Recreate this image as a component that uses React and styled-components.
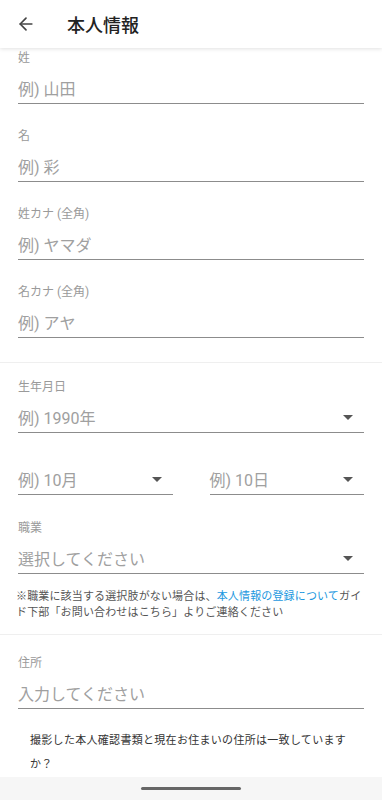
import React from "react";
import styled, { createGlobalStyle } from "styled-components";
import { ArrowLeft } from "lucide-react";

const GlobalStyle = createGlobalStyle`
  html, body {
    margin: 0;
    padding: 0;
    background: #fff;
  }
  body {
    font-family: Roboto, "Noto Sans CJK JP", sans-serif;
    -webkit-font-smoothing: antialiased;
  }
`;

const Page = styled.div`
  width: 382px;
  height: 800px;
  display: flex;
  flex-direction: column;
  overflow: hidden;
  background: #fff;
`;

const Header = styled.header`
  height: 48px;
  flex-shrink: 0;
  display: flex;
  align-items: center;
  padding-left: 16px;
  gap: 31px;
  background: #fff;
  box-shadow: 0 1px 4px rgba(0, 0, 0, 0.12);
  position: relative;
  z-index: 1;
  color: #333;
`;

const Title = styled.h1`
  margin: 0;
  font-size: 18px;
  font-weight: 500;
  color: #222;
`;

const Body = styled.main`
  flex: 1;
  overflow: hidden;
`;

const Section = styled.section`
  padding: ${(p) => p.$pad || "2px 18px 24px"};
  border-bottom: ${(p) => (p.$divided ? "1px solid #efefef" : "none")};
`;

const Field = styled.div`
  display: flex;
  flex-direction: column;
  margin-bottom: ${(p) => p.$gap ?? 24}px;
`;

const Label = styled.label`
  font-size: 12px;
  line-height: 16px;
  color: #9a9a9a;
  margin-bottom: 8px;
`;

const InputRow = styled.div`
  height: 30px;
  box-sizing: border-box;
  display: flex;
  align-items: center;
  justify-content: space-between;
  border-bottom: 1.5px solid #8c8c8c;
  font-size: 16px;
  color: #a0a0a0;
  padding-bottom: 1px;
`;

const Caret = styled.span`
  width: 0;
  height: 0;
  margin-right: 11px;
  border-left: 5px solid transparent;
  border-right: 5px solid transparent;
  border-top: 5px solid #555;
`;

const Pair = styled.div`
  display: grid;
  grid-template-columns: 1fr 1fr;
  column-gap: 37px;
  margin-top: 32px;
  margin-bottom: 25px;
`;

const Note = styled.p`
  margin: 15px -2px 0;
  font-size: 11px;
  line-height: 16px;
  letter-spacing: 0.15px;
  color: #555;
`;

const LinkText = styled.span`
  color: #1c98e0;
`;

const Question = styled.p`
  margin: 20px 12px 0;
  font-size: 11px;
  letter-spacing: 0.3px;
  line-height: 24px;
  color: #333;
`;

const NavBar = styled.div`
  height: 23px;
  flex-shrink: 0;
  background: #f6f6f6;
  display: flex;
  justify-content: center;
  padding-top: 10px;
  box-sizing: border-box;
`;

const Handle = styled.span`
  width: 100px;
  height: 3px;
  border-radius: 2px;
  background: #666;
`;

function TextField({ label, placeholder, gap }) {
  return (
    <Field $gap={gap}>
      <Label>{label}</Label>
      <InputRow>{placeholder}</InputRow>
    </Field>
  );
}

function SelectRow({ placeholder }) {
  return (
    <InputRow>
      <span>{placeholder}</span>
      <Caret />
    </InputRow>
  );
}

export default function App() {
  return (
    <>
      <GlobalStyle />
      <Page>
        <Header>
          <ArrowLeft size={20} strokeWidth={2} color="#444" />
          <Title>本人情報</Title>
        </Header>
        <Body>
          <Section $divided>
            <TextField label="姓" placeholder="例) 山田" />
            <TextField label="名" placeholder="例) 彩" />
            <TextField label="姓カナ (全角)" placeholder="例) ヤマダ" />
            <TextField label="名カナ (全角)" placeholder="例) アヤ" gap={0} />
          </Section>
          <Section $divided $pad="16px 18px 13px">
            <Field $gap={0}>
              <Label>生年月日</Label>
              <SelectRow placeholder="例) 1990年" />
            </Field>
            <Pair>
              <SelectRow placeholder="例) 10月" />
              <SelectRow placeholder="例) 10日" />
            </Pair>
            <Field $gap={0}>
              <Label>職業</Label>
              <SelectRow placeholder="選択してください" />
            </Field>
            <Note>
              ※職業に該当する選択肢がない場合は、<LinkText>本人情報の登録について</LinkText>ガイド下部「お問い合わせはこちら」よりご連絡ください
            </Note>
          </Section>
          <Section $pad="20px 18px 0">
            <TextField label="住所" placeholder="入力してください" gap={0} />
            <Question>
              撮影した本人確認書類と現在お住まいの住所は一致していますか？
            </Question>
          </Section>
        </Body>
        <NavBar>
          <Handle />
        </NavBar>
      </Page>
    </>
  );
}
